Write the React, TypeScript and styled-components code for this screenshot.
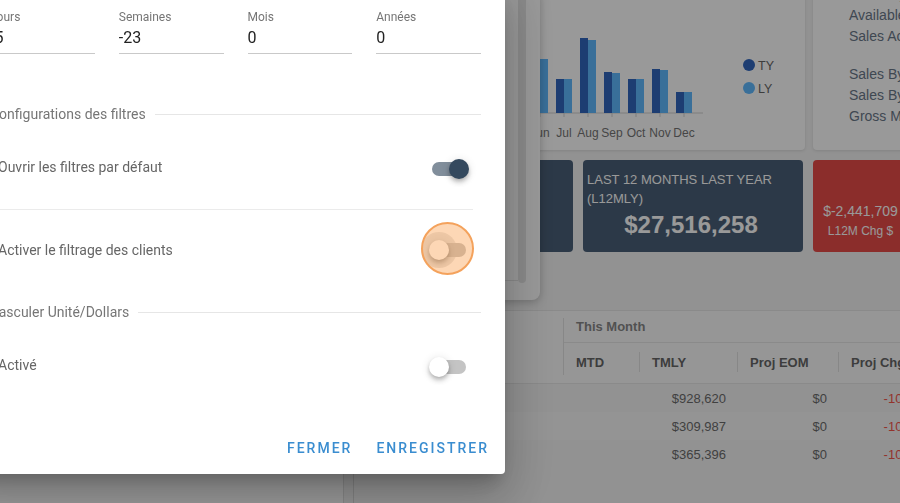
import React from "react";
import styled, { createGlobalStyle } from "styled-components";

const GlobalStyle = createGlobalStyle`
  html, body {
    margin: 0;
    padding: 0;
    width: 900px;
    height: 503px;
    overflow: hidden;
    background: #f2f2f2;
  }
  #root { width: 900px; height: 503px; }
  * { box-sizing: border-box; }
`;

/* ---------------- dashboard (behind the modal) ---------------- */

const Page = styled.div`
  position: relative;
  display: flex;
  width: 900px;
  height: 503px;
  overflow: hidden;
  font-family: "Liberation Sans", Arial, sans-serif;
`;

const Sidebar = styled.aside`
  flex: none;
  width: 344px;
  height: 100%;
  background: #fff;
  border-right: 1px solid #dcdcdc;
`;

const Main = styled.main`
  flex: none;
  width: 800px;
  margin-left: 9px;
  border-left: 1px solid #d4d4d4;
  display: flex;
  flex-direction: column;
`;

const TopRow = styled.div`
  display: flex;
  gap: 8px;
  height: 170px;
  margin-top: -20px;
`;

const Card = styled.section<{ $width: number }>`
  flex: none;
  width: ${(p) => p.$width}px;
  height: 100%;
  background: #fff;
  border-radius: 4px;
  box-shadow: 0 1px 3px rgba(0, 0, 0, 0.12);
`;

const InfoList = styled.div`
  padding: 4px 0 0 36px;
  font-size: 14px;
  line-height: 21px;
  color: #59697c;
  white-space: nowrap;
`;

const InfoGroup = styled.div`
  & + & { margin-top: 17px; }
`;

const KpiRow = styled.div`
  display: flex;
  gap: 10px;
  margin-top: 10px;
  height: 92px;
`;

const KpiCard = styled.div<{ $tone: "navy" | "red"; $width: number }>`
  flex: none;
  width: ${(p) => p.$width}px;
  border-radius: 4px;
  background: ${(p) => (p.$tone === "navy" ? "#374f69" : "#e53935")};
  color: #fff;
  display: flex;
  flex-direction: column;
  padding: ${(p) => (p.$tone === "navy" ? "10px 8px 0 4px" : "42px 0 0 0")};
  align-items: ${(p) => (p.$tone === "navy" ? "stretch" : "center")};
  white-space: ${(p) => (p.$tone === "navy" ? "normal" : "nowrap")};
`;

const KpiTitle = styled.div`
  font-size: 13px;
  line-height: 19px;
`;

const KpiValue = styled.div`
  margin-top: 3px;
  text-align: center;
  font-size: 24px;
  line-height: 28px;
  font-weight: 700;
`;

const KpiSmallValue = styled.div`
  font-size: 14px;
  line-height: 18px;
`;

const KpiCaption = styled.div`
  margin-top: 3px;
  font-size: 12px;
  line-height: 16px;
`;

const Table = styled.div`
  margin-top: 58px;
  font-size: 13px;
`;

const HeadArea = styled.div`
  display: flex;
  height: 74px;
  background: #fafafa;
  border-top: 1px solid #e3e3e3;
  border-bottom: 1px solid #e3e3e3;
`;

const HeadSpacer = styled.div`
  flex: none;
  width: 209px;
`;

const Group = styled.div`
  flex: none;
  margin: 7px 0 8px;
  border-left: 1px solid #dedede;
  display: flex;
  flex-direction: column;
`;

const GroupTitle = styled.div`
  height: 25px;
  padding: 0 0 8px 12px;
  display: flex;
  align-items: center;
  font-weight: 700;
  color: #7a7a7a;
  border-bottom: 1px solid #e3e3e3;
`;

const SubHead = styled.div`
  display: flex;
  height: 32px;
  padding-top: 6px;
  align-items: center;
`;

const HeadCell = styled.div<{ $width: number; $sep?: boolean }>`
  flex: none;
  width: ${(p) => p.$width}px;
  height: 20px;
  padding-left: 12px;
  display: flex;
  align-items: center;
  font-weight: 700;
  color: #555;
  border-left: ${(p) => (p.$sep ? "1px solid #dedede" : "none")};
`;

const BodyRow = styled.div<{ $striped?: boolean }>`
  display: grid;
  grid-template-columns: 209px 76px 98px 101px 105px;
  height: 28px;
  align-items: center;
  background: ${(p) => (p.$striped ? "#f6f6f6" : "transparent")};
  color: #5b5b5b;
`;

const Num = styled.div<{ $negative?: boolean }>`
  text-align: right;
  padding-right: 11px;
  color: ${(p) => (p.$negative ? "#f44336" : "inherit")};
`;

const FilterPanel = styled.div`
  position: absolute;
  left: 300px;
  top: -10px;
  width: 240px;
  height: 310px;
  display: flex;
  align-items: flex-start;
  padding-right: 14px;
  background: #fff;
  border-radius: 8px;
  box-shadow: 0 2px 8px rgba(0, 0, 0, 0.25);
`;

const PanelList = styled.div`
  flex: 1;
  height: 291px;
  border-bottom: 1px solid #e2e2e2;
`;

const PanelScrollbar = styled.div`
  flex: none;
  width: 8px;
  height: 293px;
  border-radius: 0 0 4px 4px;
  background: #e4e4e4;
`;

const Backdrop = styled.div`
  position: fixed;
  inset: 0;
  background: rgba(33, 33, 33, 0.46);
`;

/* ---------------- dialog ---------------- */

const Dialog = styled.div`
  position: fixed;
  left: -34px;
  top: -14px;
  width: 539px;
  background: #fff;
  border-radius: 4px;
  font-family: Roboto, "Noto Sans", sans-serif;
  box-shadow: 0 11px 15px -7px rgba(0, 0, 0, 0.2),
    0 24px 38px 3px rgba(0, 0, 0, 0.14), 0 9px 46px 8px rgba(0, 0, 0, 0.12);
`;

const DialogBody = styled.div`
  padding: 24px 24px 15px;
`;

const FieldGrid = styled.div`
  display: grid;
  grid-template-columns: repeat(4, 1fr);
  column-gap: 24px;
`;

const Field = styled.div`
  display: flex;
  flex-direction: column;
`;

const FieldLabel = styled.label`
  font-size: 12px;
  line-height: 14px;
  color: #757575;
`;

const FieldValue = styled.div`
  margin-top: 4px;
  padding-bottom: 6px;
  font-size: 16px;
  line-height: 19px;
  color: #222;
  border-bottom: 1px solid #c9c9c9;
`;

const SectionTitle = styled.div<{ $gap: number }>`
  display: flex;
  align-items: center;
  gap: 9px;
  margin-top: ${(p) => p.$gap}px;
  margin-bottom: 5px;
  font-size: 14px;
  line-height: 20px;
  color: #767676;
  white-space: nowrap;
`;

const Rule = styled.span`
  flex: 1;
  height: 1px;
  background: #e6e6e6;
`;

const SettingRow = styled.div<{ $divided?: boolean }>`
  display: flex;
  align-items: center;
  justify-content: space-between;
  padding: 21px 0 21px 8px;
  margin-right: ${(p) => (p.$divided ? "8px" : "0")};
  border-bottom: ${(p) => (p.$divided ? "1px solid #ebebeb" : "none")};
`;

const SettingLabel = styled.span<{ $raise?: boolean }>`
  font-size: 14px;
  line-height: 20px;
  padding-bottom: ${(p) => (p.$raise ? "4px" : "0")};
  color: #666;
`;

const SwitchRoot = styled.span<{ $inset: number }>`
  position: relative;
  flex: none;
  width: 58px;
  height: 38px;
  margin-right: ${(p) => p.$inset}px;
`;

const Track = styled.span<{ $on: boolean }>`
  position: absolute;
  left: 12px;
  top: 12px;
  width: 34px;
  height: 14px;
  border-radius: 7px;
  background: ${(p) => (p.$on ? "rgba(52, 73, 94, 0.62)" : "#c4c4c4")};
`;

const Ripple = styled.span`
  position: absolute;
  left: 1px;
  top: 1px;
  width: 36px;
  height: 36px;
  border-radius: 50%;
  background: rgba(0, 0, 0, 0.1);
`;

const Thumb = styled.span<{ $on: boolean }>`
  position: absolute;
  top: 9px;
  left: ${(p) => (p.$on ? 29 : 9)}px;
  width: 20px;
  height: 20px;
  border-radius: 50%;
  background: ${(p) => (p.$on ? "#34495e" : "#fff")};
  box-shadow: 0 2px 4px -1px rgba(0, 0, 0, 0.2), 0 4px 5px 0 rgba(0, 0, 0, 0.14),
    0 1px 10px 0 rgba(0, 0, 0, 0.12);
`;

const ClickMarker = styled.span`
  position: absolute;
  left: 1px;
  top: -9px;
  width: 53px;
  height: 53px;
  border-radius: 50%;
  border: 2px solid #f4a25c;
  background: rgba(250, 150, 60, 0.38);
`;

const Actions = styled.div`
  display: flex;
  justify-content: flex-end;
  gap: 8px;
  padding: 8px;
`;

const ActionButton = styled.button`
  height: 36px;
  padding: 0 8px;
  border: none;
  background: transparent;
  font-family: Roboto, "Noto Sans", sans-serif;
  font-size: 14px;
  font-weight: 500;
  letter-spacing: 2px;
  text-transform: uppercase;
  color: #3a8dd0;
  cursor: pointer;
`;

/* ---------------- pieces ---------------- */

type SwitchProps = { on: boolean; focused?: boolean; inset?: number };

function Switch({ on, focused, inset = 3 }: SwitchProps) {
  return (
    <SwitchRoot role="switch" aria-checked={on} $inset={inset}>
      {focused && <Ripple />}
      <Track $on={on} />
      <Thumb $on={on} />
      {focused && <ClickMarker />}
    </SwitchRoot>
  );
}

const months = ["Jan", "Feb", "Mar", "Apr", "May", "Jun", "Jul", "Aug", "Sep", "Oct", "Nov", "Dec"];
const ty = [40, 35, 50, 45, 55, 52, 34, 75, 41, 34, 44, 21];
const ly = [42, 36, 52, 47, 56, 54, 34, 73, 40, 34, 43, 21];
const TY_COLOR = "#1a56b8";
const LY_COLOR = "#4fb2ff";

function SalesChart() {
  const base = 133;
  return (
    <svg width="451" height="170" viewBox="0 0 451 170">
      <line x1="40" y1={base} x2="349" y2={base} stroke="#cccccc" strokeWidth="1" />
      {months.map((m, i) => {
        const x = 58 + 24 * i;
        return (
          <g key={m}>
            <rect x={x} y={base - ty[i]} width="8" height={ty[i]} fill={TY_COLOR} />
            <rect x={x + 8} y={base - ly[i]} width="8" height={ly[i]} fill={LY_COLOR} />
            <line x1={x + 8} y1={base} x2={x + 8} y2={base + 4} stroke="#cccccc" />
            <text
              x={x + 8}
              y={157}
              textAnchor="middle"
              fontSize="12"
              fill="#666"
              fontFamily="Liberation Sans, Arial, sans-serif"
            >
              {m}
            </text>
          </g>
        );
      })}
      <circle cx="395" cy="85" r="6" fill={TY_COLOR} />
      <text x="404" y="89.5" fontSize="12.5" fill="#555" fontFamily="Liberation Sans, Arial, sans-serif">
        TY
      </text>
      <circle cx="395" cy="108" r="6" fill={LY_COLOR} />
      <text x="404" y="112.5" fontSize="12.5" fill="#555" fontFamily="Liberation Sans, Arial, sans-serif">
        LY
      </text>
    </svg>
  );
}

const rows = [
  { tmly: "$928,620", eom: "$0", chg: "-100.0%" },
  { tmly: "$309,987", eom: "$0", chg: "-100.0%" },
  { tmly: "$365,396", eom: "$0", chg: "-100.0%" },
];

export default function App() {
  return (
    <>
      <GlobalStyle />
      <Page>
        <Sidebar />
        <Main>
          <TopRow>
            <Card $width={451}>
              <SalesChart />
            </Card>
            <Card $width={300}>
              <InfoList>
                <InfoGroup>
                  <div>Inventory Summary</div>
                  <div>Available Inventory</div>
                  <div>Sales Activity</div>
                </InfoGroup>
                <InfoGroup>
                  <div>Sales By Region</div>
                  <div>Sales By Category</div>
                  <div>Gross Margin</div>
                </InfoGroup>
              </InfoList>
            </Card>
          </TopRow>

          <KpiRow>
            <KpiCard $tone="navy" $width={219} />
            <KpiCard $tone="navy" $width={220}>
              <KpiTitle>LAST 12 MONTHS LAST YEAR (L12MLY)</KpiTitle>
              <KpiValue>$27,516,258</KpiValue>
            </KpiCard>
            <KpiCard $tone="red" $width={95}>
              <KpiSmallValue>$-2,441,709</KpiSmallValue>
              <KpiCaption>L12M Chg $</KpiCaption>
            </KpiCard>
          </KpiRow>

          <Table>
            <HeadArea>
              <HeadSpacer />
              <Group>
                <GroupTitle>This Month</GroupTitle>
                <SubHead>
                  <HeadCell $width={75}>MTD</HeadCell>
                  <HeadCell $width={98} $sep>
                    TMLY
                  </HeadCell>
                  <HeadCell $width={101} $sep>
                    Proj EOM
                  </HeadCell>
                  <HeadCell $width={105} $sep>
                    Proj Chg
                  </HeadCell>
                </SubHead>
              </Group>
            </HeadArea>
            {rows.map((r, i) => (
              <BodyRow key={i} $striped={i === 1}>
                <div />
                <div />
                <Num>{r.tmly}</Num>
                <Num>{r.eom}</Num>
                <Num $negative>{r.chg}</Num>
              </BodyRow>
            ))}
          </Table>
        </Main>

        <FilterPanel>
          <PanelList />
          <PanelScrollbar />
        </FilterPanel>
      </Page>

      <Backdrop />

      <Dialog role="dialog">
        <DialogBody>
          <FieldGrid>
            <Field>
              <FieldLabel>Jours</FieldLabel>
              <FieldValue>-5</FieldValue>
            </Field>
            <Field>
              <FieldLabel>Semaines</FieldLabel>
              <FieldValue>-23</FieldValue>
            </Field>
            <Field>
              <FieldLabel>Mois</FieldLabel>
              <FieldValue>0</FieldValue>
            </Field>
            <Field>
              <FieldLabel>Années</FieldLabel>
              <FieldValue>0</FieldValue>
            </Field>
          </FieldGrid>

          <SectionTitle $gap={50}>
            Configurations des filtres
            <Rule />
          </SectionTitle>
          <SettingRow $divided>
            <SettingLabel $raise>Ouvrir les filtres par défaut</SettingLabel>
            <Switch on inset={-5} />
          </SettingRow>
          <SettingRow>
            <SettingLabel>Activer le filtrage des clients</SettingLabel>
            <Switch on={false} focused />
          </SettingRow>

          <SectionTitle $gap={12}>
            Basculer Unité/Dollars
            <Rule />
          </SectionTitle>
          <SettingRow>
            <SettingLabel $raise>Activé</SettingLabel>
            <Switch on={false} />
          </SettingRow>
        </DialogBody>
        <Actions>
          <ActionButton>Fermer</ActionButton>
          <ActionButton>Enregistrer</ActionButton>
        </Actions>
      </Dialog>
    </>
  );
}
